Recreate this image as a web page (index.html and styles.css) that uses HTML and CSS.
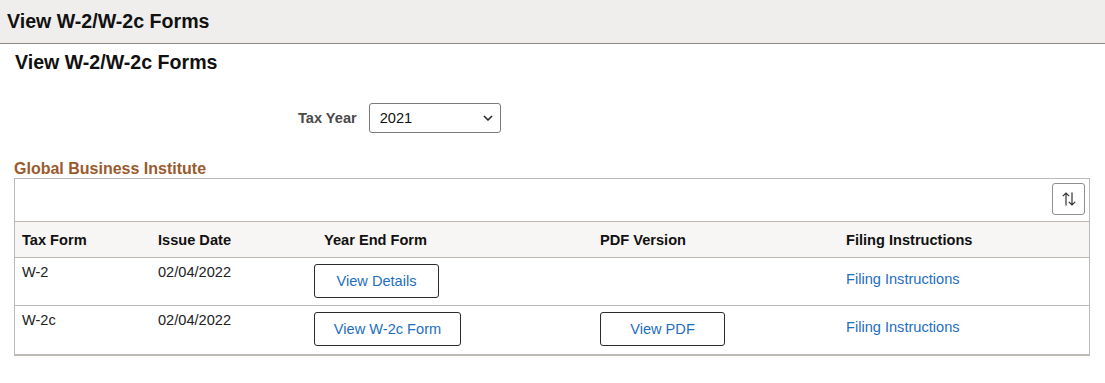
FILE: index.html
```html
<!DOCTYPE html>
<html lang="en">
<head>
    <meta charset="UTF-8">
    <meta name="viewport" content="width=device-width, initial-scale=1.0">
    <title>View W-2/W-2c Forms</title>
    <link rel="stylesheet" href="styles.css">
</head>
<body>
    <div class="page-header">View W-2/W-2c Forms</div>

    <div class="content">
        <h1 class="page-title">View W-2/W-2c Forms</h1>

        <div class="year-row">
            <label for="taxYear" class="year-label">Tax Year</label>
            <span class="select-wrap">
                <select id="taxYear" class="year-select">
                    <option>2021</option>
                    <option>2020</option>
                    <option>2019</option>
                </select>
                <svg class="select-chevron" width="10" height="6" viewBox="0 0 10 6">
                    <path d="M1 1 L5 5 L9 1" fill="none" stroke="#222" stroke-width="1.5"/>
                </svg>
            </span>
        </div>

        <h2 class="company-title">Global Business Institute</h2>

        <div class="grid">
            <div class="grid-toolbar">
                <button class="sort-btn" title="Sort">
                    <svg width="16" height="16" viewBox="0 0 16 16">
                        <path d="M5 14.5 V2 M1.8 5.2 L5 2 L8.2 5.2" fill="none" stroke="#333" stroke-width="1.2"/>
                        <path d="M11 1.5 V14 M7.8 10.8 L11 14 L14.2 10.8" fill="none" stroke="#333" stroke-width="1.2"/>
                    </svg>
                </button>
            </div>
            <table class="forms-table">
                <colgroup>
                    <col style="width: 136px">
                    <col style="width: 156px">
                    <col style="width: 286px">
                    <col style="width: 246px">
                    <col>
                </colgroup>
                <thead>
                    <tr>
                        <th>Tax Form</th>
                        <th>Issue Date</th>
                        <th class="th-yearend">Year End Form</th>
                        <th>PDF Version</th>
                        <th>Filing Instructions</th>
                    </tr>
                </thead>
                <tbody>
                    <tr>
                        <td>W-2</td>
                        <td>02/04/2022</td>
                        <td class="btn-cell"><button class="action-btn btn-details">View Details</button></td>
                        <td class="btn-cell"></td>
                        <td class="link-cell"><a href="#">Filing Instructions</a></td>
                    </tr>
                    <tr>
                        <td>W-2c</td>
                        <td>02/04/2022</td>
                        <td class="btn-cell"><button class="action-btn btn-w2c">View W-2c Form</button></td>
                        <td class="btn-cell"><button class="action-btn btn-details">View PDF</button></td>
                        <td class="link-cell"><a href="#">Filing Instructions</a></td>
                    </tr>
                </tbody>
            </table>
        </div>
    </div>
</body>
</html>
```

FILE: styles.css
```css
body {
    font-family: "Liberation Sans", Arial, sans-serif;
    margin: 0;
    color: #222;
    background-color: white;
}

.page-header {
    height: 43px;
    line-height: 43px;
    padding-left: 7px;
    background-color: #efeeec;
    border-bottom: 1px solid #8c8a87;
    font-size: 19.6px;
    font-weight: bold;
    color: #111;
}

.content {
    padding: 0 14px;
}

.page-title {
    margin: 7px 0 0 1px;
    font-size: 19.6px;
    line-height: 23px;
    font-weight: bold;
    color: #111;
}

.year-row {
    margin-top: 29px;
    display: flex;
    align-items: center;
    padding-left: 284px;
    gap: 12px;
}

.year-label {
    font-size: 14.6px;
    font-weight: bold;
    color: #4a4a4a;
}

.select-wrap {
    position: relative;
    display: inline-block;
}

.year-select {
    appearance: none;
    -webkit-appearance: none;
    width: 132px;
    height: 30px;
    padding: 0 24px 0 10px;
    border: 1px solid #7a7a7a;
    border-radius: 3px;
    background-color: white;
    font-family: "Liberation Sans", Arial, sans-serif;
    font-size: 14.6px;
    color: #111;
}

.select-chevron {
    position: absolute;
    right: 8px;
    top: 12px;
    pointer-events: none;
}

.company-title {
    margin: 27px 0 0 0;
    font-size: 16px;
    line-height: 18px;
    font-weight: bold;
    color: #9b5a2e;
}

.grid {
    width: 1074px;
    border: 1px solid #bdb9b5;
    border-bottom-width: 2px;
}

.grid-toolbar {
    height: 42px;
    display: flex;
    justify-content: flex-end;
    align-items: flex-start;
    padding: 4px 4px 0 0;
    box-sizing: border-box;
}

.sort-btn {
    width: 33px;
    height: 32px;
    display: flex;
    align-items: center;
    justify-content: center;
    padding: 0;
    background-color: white;
    border: 1px solid #8f8f8f;
    border-radius: 3px;
    cursor: pointer;
}

.forms-table {
    width: 100%;
    border-collapse: collapse;
    table-layout: fixed;
    font-size: 14.6px;
}

.forms-table th {
    height: 35px;
    padding: 0 7px;
    text-align: left;
    font-weight: bold;
    color: #111;
    background-color: #f7f6f4;
    border-top: 1px solid #bdb9b5;
    border-bottom: 1px solid #bdb9b5;
}

.forms-table th.th-yearend {
    padding-left: 17px;
}

.forms-table td {
    height: 48px;
    padding: 6px 7px 0 7px;
    vertical-align: top;
    color: #222;
    border-bottom: 1px solid #bdb9b5;
    box-sizing: border-box;
}

.forms-table tbody tr:last-child td {
    border-bottom: none;
}

.forms-table td.btn-cell {
    padding-top: 6px;
}

.forms-table td.link-cell {
    padding-top: 13px;
}

.link-cell a {
    color: #1d6ec1;
    text-decoration: none;
}

.action-btn {
    height: 34px;
    padding: 0;
    background-color: white;
    border: 1px solid #2b2b2b;
    border-radius: 3px;
    font-family: "Liberation Sans", Arial, sans-serif;
    font-size: 14.6px;
    color: #1d6ec1;
    cursor: pointer;
}

.btn-details {
    width: 125px;
}

.btn-w2c {
    width: 147px;
}
```
